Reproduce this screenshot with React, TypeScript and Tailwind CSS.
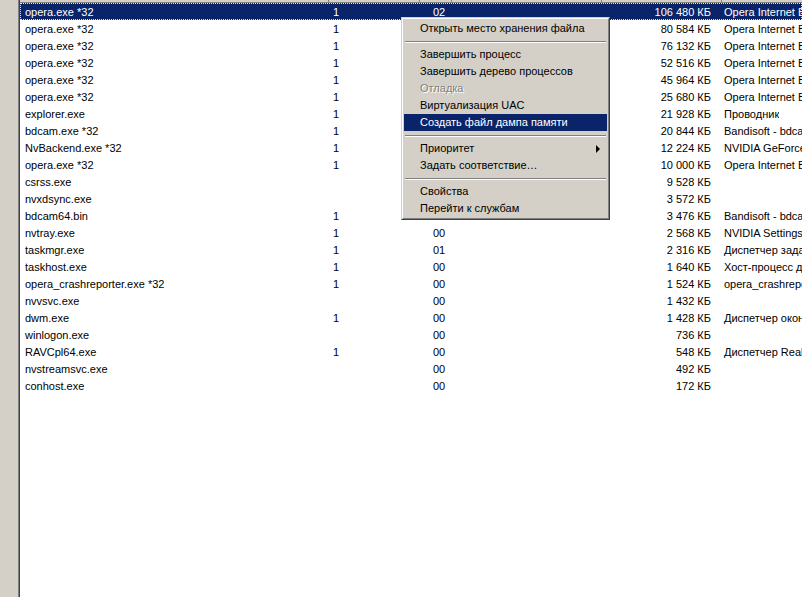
import React from "react";

type Row = [string, string, string, string, string];

const rows: Row[] = [
  ["opera.exe *32", "1", "02", "106 480 КБ", "Opera Internet Browser"],
  ["opera.exe *32", "1", "", "80 584 КБ", "Opera Internet Browser"],
  ["opera.exe *32", "1", "", "76 132 КБ", "Opera Internet Browser"],
  ["opera.exe *32", "1", "", "52 516 КБ", "Opera Internet Browser"],
  ["opera.exe *32", "1", "", "45 964 КБ", "Opera Internet Browser"],
  ["opera.exe *32", "1", "", "25 680 КБ", "Opera Internet Browser"],
  ["explorer.exe", "1", "", "21 928 КБ", "Проводник"],
  ["bdcam.exe *32", "1", "", "20 844 КБ", "Bandisoft - bdcam"],
  ["NvBackend.exe *32", "1", "", "12 224 КБ", "NVIDIA GeForce Experience Backend"],
  ["opera.exe *32", "1", "", "10 000 КБ", "Opera Internet Browser"],
  ["csrss.exe", "", "", "9 528 КБ", ""],
  ["nvxdsync.exe", "", "", "3 572 КБ", ""],
  ["bdcam64.bin", "1", "", "3 476 КБ", "Bandisoft - bdcam"],
  ["nvtray.exe", "1", "00", "2 568 КБ", "NVIDIA Settings"],
  ["taskmgr.exe", "1", "01", "2 316 КБ", "Диспетчер задач Windows"],
  ["taskhost.exe", "1", "00", "1 640 КБ", "Хост-процесс для задач Windows"],
  ["opera_crashreporter.exe *32", "1", "00", "1 524 КБ", "opera_crashreporter"],
  ["nvvsvc.exe", "", "00", "1 432 КБ", ""],
  ["dwm.exe", "1", "00", "1 428 КБ", "Диспетчер окон рабочего стола"],
  ["winlogon.exe", "", "00", "736 КБ", ""],
  ["RAVCpl64.exe", "1", "00", "548 КБ", "Диспетчер Realtek HD"],
  ["nvstreamsvc.exe", "", "00", "492 КБ", ""],
  ["conhost.exe", "", "00", "172 КБ", ""],
];

function MenuItem({
  label,
  active,
  disabled,
  arrow,
}: {
  label: string;
  active?: boolean;
  disabled?: boolean;
  arrow?: boolean;
}) {
  return (
    <div
      className={
        "relative h-[17px] leading-[17px] pl-[16px] pr-[8px] whitespace-nowrap " +
        (active ? "bg-[#0a246a] text-white " : "") +
        (disabled ? "text-[#808080] [text-shadow:1px_1px_0_#ffffff] " : "")
      }
    >
      {label}
      {arrow && (
        <span className="absolute right-[7px] top-[5px] w-0 h-0 border-y-[4px] border-y-transparent border-l-[4px] border-l-black" />
      )}
    </div>
  );
}

function Sep() {
  return (
    <div className="h-[9px] flex flex-col justify-center px-[1px]">
      <div className="h-[1px] bg-[#808080]" />
      <div className="h-[1px] bg-white" />
    </div>
  );
}

export default function App() {
  return (
    <div
      className="relative w-[802px] h-[597px] overflow-hidden bg-white flex text-[11px] text-black"
      style={{ fontFamily: '"Liberation Sans", Arial, sans-serif' }}
    >
      <div className="w-[19px] shrink-0 bg-[#d4d0c8] border-r border-r-[#808080]" />
      <div className="w-[1px] shrink-0 bg-[#404040]" />
      <div className="flex-1 flex flex-col min-w-0">
        <div className="h-[3px] shrink-0 flex bg-[#d4d0c8] border-b border-b-[#808080]">
          <div className="w-[309px] border-r border-r-[#808080]" />
          <div className="w-[91px] border-r border-r-[#808080]" />
          <div className="w-[32px] border-r border-r-[#808080]" />
          <div className="w-[150px] border-r border-r-[#808080]" />
          <div className="w-[120px] border-r border-r-[#808080]" />
        </div>
        {rows.map((r, i) => {
          const sel = i === 0;
          return (
            <div
              key={i}
              className={
                "flex h-[17px] pt-[1px] leading-[16px] whitespace-nowrap shrink-0 " +
                (sel
                  ? "bg-[#0a246a] text-white outline outline-1 outline-dotted outline-offset-[-1px] outline-[#f5e6a0]"
                  : "")
              }
            >
              <div className="w-[309px] pl-[5px] shrink-0">{r[0]}</div>
              <div className="w-[100px] pl-[4px] shrink-0">{r[1]}</div>
              <div className="w-[130px] pl-[4px] shrink-0">{r[2]}</div>
              <div className="w-[152px] text-right shrink-0">{r[3]}</div>
              <div className="pl-[13px] overflow-hidden">{r[4]}</div>
            </div>
          );
        })}
      </div>

      <div className="absolute left-[401px] top-[17px] w-[209px] bg-[#d4d0c8] border border-t-[#d4d0c8] border-l-[#d4d0c8] border-r-[#404040] border-b-[#404040]">
        <div className="border border-t-white border-l-white border-r-[#808080] border-b-[#808080] p-[1px]">
          <MenuItem label="Открыть место хранения файла" />
          <Sep />
          <MenuItem label="Завершить процесс" />
          <MenuItem label="Завершить дерево процессов" />
          <MenuItem label="Отладка" disabled />
          <MenuItem label="Виртуализация UAC" />
          <MenuItem label="Создать файл дампа памяти" active />
          <Sep />
          <MenuItem label="Приоритет" arrow />
          <MenuItem label="Задать соответствие…" />
          <Sep />
          <MenuItem label="Свойства" />
          <MenuItem label="Перейти к службам" />
        </div>
      </div>
    </div>
  );
}
